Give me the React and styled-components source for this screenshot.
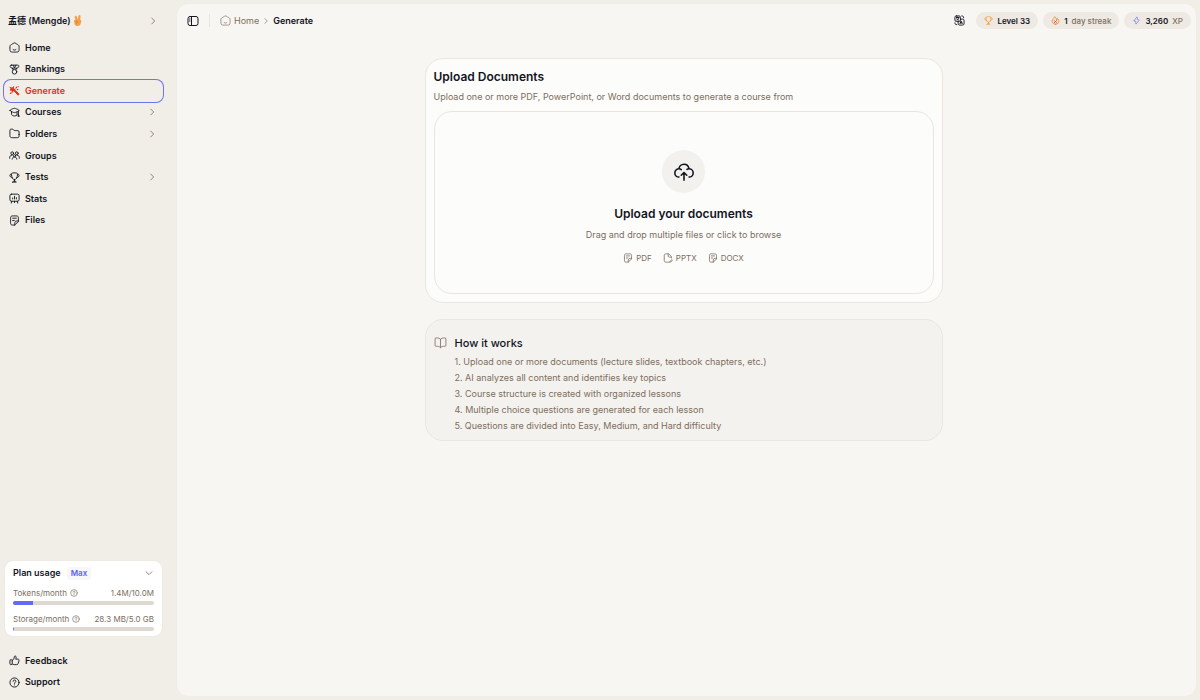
import React from 'react';
import styled, { createGlobalStyle } from 'styled-components';

const GlobalStyle = createGlobalStyle`
    *, *::before, *::after {
        box-sizing: border-box;
    }

    body {
        margin: 0;
        background-color: #F1EEE7;
        color: #12151F;
        font-family: Inter, "Noto Sans CJK SC", sans-serif;
        font-size: 9px;
        line-height: 16px;
    }

    button {
        padding: 0;
        border: 0;
        background: none;
        color: inherit;
        font: inherit;
        cursor: pointer;
    }

    a {
        color: inherit;
        text-decoration: none;
    }

    h1, h2, p, ul, ol {
        margin: 0;
        padding: 0;
        list-style: none;
    }
`;

const Layout = styled.div`
    display: grid;
    grid-template-columns: 168px minmax(0, 1fr);
    column-gap: 9px;
    min-height: 100vh;
    padding-right: 4px;
`;

const Sidebar = styled.aside`
    display: flex;
    flex-direction: column;
    padding: 10px 5px 7px 4px;
`;

const SidebarSpacer = styled.div`
    flex: 1;
`;

const Profile = styled.button`
    display: flex;
    justify-content: space-between;
    align-items: center;
    height: 21px;
    margin-bottom: 6px;
    padding: 0 5px 0 4px;
    font-weight: 600;
`;

const ProfileName = styled.span`
    display: flex;
    align-items: center;
    gap: 2px;
`;

const NavList = styled.ul`
    display: grid;
    grid-auto-rows: 1fr;
    min-height: ${(props) => props.$height}px;
`;

const NavItem = styled.li`
    display: flex;
`;

const NavLink = styled.a`
    display: flex;
    align-items: center;
    gap: 5px;
    flex: 1;
    padding: 0 6px 0 5px;
    border-radius: 7px;
    font-weight: 600;
    color: ${(props) => (props.$active ? '#E5301F' : 'inherit')};
    box-shadow: ${(props) => (props.$active ? '0 0 0 1px #6C75EE' : 'none')};
`;

const NavLabel = styled.span`
    flex: 1;
`;

const Icon = styled.svg`
    flex: none;
    width: ${(props) => props.$size || 11}px;
    height: ${(props) => props.$size || 11}px;
    fill: none;
    stroke: ${(props) => props.$color || 'currentColor'};
    stroke-width: ${(props) => props.$weight || 2};
    stroke-linecap: round;
    stroke-linejoin: round;
`;

const PlanCard = styled.section`
    display: flex;
    flex-direction: column;
    margin: 0 1px 14px 1px;
    padding: 3px 8px 5px;
    border-radius: 8px;
    background-color: #FFFFFF;
    box-shadow: 0 0 1px #D5D0C5;
`;

const PlanHeader = styled.button`
    display: flex;
    align-items: center;
    gap: 6px;
    height: 18px;
    margin-bottom: 3px;
    font-weight: 600;
`;

const PlanBadge = styled.span`
    padding: 0 4px;
    border-radius: 3px;
    background-color: #F7F7FA;
    color: #5B62F0;
    font-size: 8px;
    line-height: 13px;
`;

const PlanChevron = styled.span`
    display: flex;
    margin-left: auto;
`;

const Usage = styled.div`
    display: flex;
    flex-direction: column;
    padding-bottom: 6px;

    & + & {
        padding-bottom: 0;
    }
`;

const UsageRow = styled.div`
    display: flex;
    justify-content: space-between;
    align-items: center;
    color: #7D6E60;
    font-size: 8px;
`;

const UsageLabel = styled.span`
    display: flex;
    align-items: center;
    gap: 3px;
`;

const UsageTrack = styled.div`
    height: 4px;
    border-radius: 2px;
    background-color: #DDD9D1;
    overflow: hidden;
`;

const UsageFill = styled.div`
    height: 100%;
    background-color: #636BF5;
`;

const Main = styled.main`
    display: flex;
    flex-direction: column;
    margin: 4px 0;
    border-radius: 11px;
    background-color: #F7F6F2;
    box-shadow: 0 0 1px #E6E2D9;
`;

const TopBar = styled.header`
    display: flex;
    align-items: center;
    height: 33px;
    padding: 0 5px 0 10px;
`;

const IconButton = styled.button`
    display: flex;
`;

const Separator = styled.div`
    width: 1px;
    height: 13px;
    margin: 0 10px;
    background-color: #E8E5DE;
`;

const Breadcrumb = styled.nav`
    display: flex;
    align-items: center;
    gap: 3px;
    flex: 1;
    color: #7D6E60;
`;

const HomeCrumb = styled.a`
    display: flex;
    align-items: center;
    gap: 3px;
`;

const CurrentCrumb = styled.span`
    color: #12151F;
    font-weight: 600;
`;

const TopActions = styled.div`
    display: flex;
    align-items: center;
    gap: 11px;
`;

const Badges = styled.div`
    display: flex;
    align-items: center;
    gap: 5px;
`;

const Badge = styled.div`
    display: flex;
    align-items: center;
    gap: 4px;
    height: 17px;
    padding: 0 8px;
    border-radius: 9px;
    background-color: #EEEAE3;
    color: #7D6E60;
    font-size: 8px;
    font-weight: 500;
`;

const BadgeValue = styled.strong`
    color: #12151F;
    font-weight: 600;
`;

const Content = styled.div`
    display: flex;
    flex-direction: column;
    align-items: center;
    gap: 16px;
    padding: 21px 6px 21px 0;
`;

const Card = styled.section`
    width: 100%;
    max-width: 518px;
    border: 1px solid #EAE7DF;
    border-radius: 18px;
    background-color: ${(props) => (props.$muted ? '#F4F2EE' : '#FCFCFA')};
`;

const UploadCard = styled(Card)`
    padding: 8px;
`;

const CardTitle = styled.h1`
    font-size: 12px;
    font-weight: 600;
    line-height: 19px;
`;

const CardText = styled.p`
    color: #7D6E60;
`;

const CardHeader = styled.div`
    display: flex;
    flex-direction: column;
    gap: 3px;
    margin-bottom: 6px;
`;

const DropZone = styled.button`
    display: flex;
    flex-direction: column;
    align-items: center;
    width: 100%;
    padding: 38px 16px 27px;
    border: 1px solid #E9E6DF;
    border-radius: 18px;
`;

const UploadCircle = styled.span`
    display: flex;
    justify-content: center;
    align-items: center;
    width: 43px;
    height: 43px;
    margin-bottom: 11px;
    border-radius: 50%;
    background-color: #F3F1ED;
`;

const DropTitle = styled.span`
    margin-bottom: 4px;
    font-size: 12px;
    font-weight: 600;
    line-height: 19px;
`;

const DropText = styled.span`
    margin-bottom: 7px;
    color: #7D6E60;
`;

const FileTypes = styled.span`
    display: flex;
    gap: 11px;
    color: #7D6E60;
    font-size: 8px;
`;

const FileType = styled.span`
    display: flex;
    align-items: center;
    gap: 3px;
`;

const StepsCard = styled(Card)`
    display: flex;
    gap: 8px;
    padding: 15px 8px 6px;
    color: #7D6E60;
`;

const StepsIcon = styled.div`
    display: flex;
    padding-top: 1px;
`;

const StepsTitle = styled.h2`
    margin-bottom: 2px;
    color: #12151F;
    font-size: 11px;
    font-weight: 500;
    line-height: 17px;
`;

const icons = {
    home: (
        <>
            <path d="M2 12.200c0-2.300 0-3.400.5-4.400.5-.9 1.500-1.500 3.400-2.700l2-1.200C9.900 2.600 10.900 2 12 2s2.100.6 4.100 1.900l2 1.200c1.900 1.200 2.900 1.800 3.400 2.700.5 1 .5 2.100.5 4.400v1.500c0 3.900 0 5.900-1.200 7.100S17.800 22 14 22h-4c-3.800 0-5.700 0-6.800-1.200S2 17.600 2 13.700z" />
            <path d="M9 16.500c.9.600 1.900 1 3 1s2.100-.4 3-1" />
        </>
    ),
    rankings: (
        <>
            <circle cx="12" cy="17" r="5" />
            <path d="M9 12.500 7.500 9.500M15 12.500l1.500-3M5 2.500h14c2.500 0 3 2 2 4-.7 1.500-2 2.500-4 2.500H7C5 9 3.700 8 3 6.500c-1-2-.5-4 2-4zM9 2.500l3 6 3-6" />
        </>
    ),
    generate: (
        <>
            <path d="M9.500 11 19 21.500c2 1 3.500-1 2.500-2.500L11 9.500z" fill="currentColor" />
            <path d="M2.500 5.500 7 7l3-3.500-.5 5 4 1.500-4.500 1.500L8 16l-2.500-4.500L2 11l3-2z" fill="currentColor" />
            <path d="M15 7l2-2.500M20 3.500h.1M18 10h1.500M3 18.500l2-1.500" strokeWidth="2.500" />
        </>
    ),
    courses: (
        <>
            <path d="M2 7.500C2 6 8 4 10 3.200c1.800-.6 2.200-.6 4 0C16 4 22 6 22 7.500S16 11 14 11.800c-1.800.6-2.200.6-4 0C8 11 2 9 2 7.500zM20.500 9v8.500M20.500 17.500l-1 3h2zM5.500 10v6.500c2 2.500 4 3 6.500 3s4-.5 5.500-2V11" />
        </>
    ),
    folders: (
        <path d="M22 14v-3c0-2.500 0-3.700-.8-4.500S19.200 5.700 17 5.700h-3.500c-1 0-1.500 0-2.200-.4-.6-.3-.9-.8-1.600-1.500C8.800 2.700 8.300 2.500 7 2.500H6c-2 0-3 0-3.500.9C2 4 2 5 2 7v7c0 3.300 0 5 1 6s2.700 1.200 6 1.200h6c3.300 0 5 0 6-1s1-2.900 1-6.200z" />
    ),
    groups: (
        <>
            <circle cx="7" cy="7" r="3" />
            <circle cx="17" cy="7" r="3" />
            <circle cx="12" cy="12.500" r="2.500" />
            <path d="M1.500 18v-2c0-2.500 1.500-4.500 5-4.500M22.500 18v-2c0-2.500-1.500-4.500-5-4.500M7 20c0-3 2-4.500 5-4.500s5 1.500 5 4.500" />
        </>
    ),
    trophy: (
        <>
            <path d="M12 17c-3.500 0-6.500-5.500-6.500-11.500C5.500 3 6 2.500 8.500 2h7c2.500.5 3 1 3 3.500C18.500 11.500 15.500 17 12 17zM5.500 5C3 5 2 5 2 7c0 3 2.500 5.200 5 5.700M18.500 5C21 5 22 5 22 7c0 3-2.500 5.200-5 5.700M12 17v3M8 22h8c-.5-1.500-2-2-4-2s-3.500.5-4 2z" />
        </>
    ),
    stats: (
        <>
            <rect x="2" y="2.500" width="20" height="15.500" rx="3.500" />
            <path d="M8 13v-2M12 13V7M16 13v-3M6 18l-1 4M18 18l1 4M12 18v3" />
        </>
    ),
    note: (
        <>
            <path d="M20.500 12V9c0-3.300 0-5-1-6s-2.700-1-6-1h-3c-3.300 0-5 0-6 1s-1 2.700-1 6v6c0 3.300 0 5 1 6s2.700 1 6 1h1.500l8.500-7.500zM12.500 22c0-5 0-7.500 2-8.500 1.500-.8 4-.5 6-.5M8 7h8M8 12h3.500" />
        </>
    ),
    file: (
        <>
            <path d="M13 22H10c-3.300 0-5 0-6-1s-1-2.700-1-6V9c0-3.300 0-5 1-6s2.700-1 6-1h2.500c1 0 1.500.2 2.200.9l4.800 5c.8.8 1 1.200 1 2.300V12M12.500 2.500V5c0 2.500 0 4 1 4.500s2 .5 6.500.5M16 21.500l5-5.500 1.500 1.500L18 22h-2z" />
        </>
    ),
    like: (
        <>
            <path d="M2 12c0-1 .8-2 2-2s3 .8 3 2v7c0 1.500-1.500 2-3 2s-2-.8-2-2zM7 12c3.500-2 4-4.500 4.500-7.500.3-2 1-2.500 2-2.500 1.500 0 2 1.500 2 3s-.5 3-1 4h5c2 0 2.800 1.500 2.300 3.500l-1.800 6c-.5 1.800-1.500 2.500-3.500 2.500H12c-2 0-3.500-.5-5-1.500" />
        </>
    ),
    help: (
        <>
            <circle cx="12" cy="12" r="10" />
            <path d="M9 9.500C9 7.500 10.300 6.500 12 6.500s3 1 3 2.800c0 2.200-3 2.200-3 4.700M12 17.200v.1" />
        </>
    ),
    right: <path d="m9 5 7 7-7 7" />,
    down: <path d="m5 9 7 7 7-7" />,
    panel: (
        <>
            <rect x="2" y="3" width="20" height="18" rx="4" />
            <path d="M9 3v18M5 8h1M5 12h1" />
        </>
    ),
    translate: (
        <>
            <rect x="2" y="2" width="12" height="12" rx="3" />
            <path d="M5 5.500h6M8 4v1.500M6 11c3-1 4-3 4.500-5.500M6 8c1 1.500 2 2.500 4 3M14 9h4c3 0 4 1 4 4v5c0 3-1 4-4 4h-5c-3 0-4-1-4-4v-4M13 19l2.500-6 2.500 6M14 17h3M17 2c3 0 4 1 4 4M2 17c0 3 1 4 4 4" />
        </>
    ),
    flame: (
        <>
            <path d="M12 22c5 0 9-3 9-8 0-4-2-6-4-7-1 2-1 3-2 3.500C14.500 6 12.500 3 9.500 2 10 6.500 3 8 3 14c0 5 4 8 9 8z" />
            <path d="m9 17.500 6-5M9 13v.1M15 18v.1" stroke="#E5402E" />
        </>
    ),
    bolt: <path d="M5.500 12.500 12.500 3c.8-1 1.500-.7 1.500.5V9c0 .7.3 1 1 1h3c1.200 0 1.500.7.8 1.600L11.500 21c-.8 1-1.500.7-1.500-.5V15c0-.7-.3-1-1-1H6.300c-1.100 0-1.500-.7-.8-1.500z" />,
    upload: (
        <>
            <path d="M17.500 17.500C20 17.500 22 15.500 22 13s-2-4.500-4.500-4.500C17 5.500 15 3.500 12 3.500S6.700 5.700 6.500 8.500C4 8.500 2 10.500 2 13s2 4.500 4.500 4.500M17.500 8.500c-1 0-1.700.2-2.300.6M6.500 8.500c1 0 1.800.3 2.500.9" />
            <path d="M12 21v-8M9 15.500l3-3 3 3" />
        </>
    ),
    book: (
        <path d="M12 6c-1.500-2-4-2.500-8-2.500-1.500 0-2 .5-2 2V17c0 1.500.5 2 2 2 4 0 6.500.5 8 2.500 1.500-2 4-2.500 8-2.500 1.500 0 2-.5 2-2V5.500c0-1.500-.5-2-2-2-4 0-6.500.5-8 2.500zM12 6v15.500" />
    ),
};

const navItems = [
    { label: 'Home', icon: 'home' },
    { label: 'Rankings', icon: 'rankings' },
    { label: 'Generate', icon: 'generate', active: true },
    { label: 'Courses', icon: 'courses', nested: true },
    { label: 'Folders', icon: 'folders', nested: true },
    { label: 'Groups', icon: 'groups' },
    { label: 'Tests', icon: 'trophy', nested: true },
    { label: 'Stats', icon: 'stats' },
    { label: 'Files', icon: 'note' },
];

const footerItems = [
    { label: 'Feedback', icon: 'like' },
    { label: 'Support', icon: 'help' },
];

const usage = [
    { label: 'Tokens/month', value: '1.4M/10.0M', percent: 14 },
    { label: 'Storage/month', value: '28.3 MB/5.0 GB', percent: 1 },
];

const steps = [
    'Upload one or more documents (lecture slides, textbook chapters, etc.)',
    'AI analyzes all content and identifies key topics',
    'Course structure is created with organized lessons',
    'Multiple choice questions are generated for each lesson',
    'Questions are divided into Easy, Medium, and Hard difficulty',
];

function Glyph({ name, size, color, weight }) {
    return (
        <Icon viewBox="0 0 24 24" $size={size} $color={color} $weight={weight} aria-hidden="true">
            {icons[name]}
        </Icon>
    );
}

function VictoryHand() {
    return (
        <svg width="9" height="11" viewBox="0 0 18 22" aria-hidden="true">
            <path d="M5.500 4 8 12M13 2.500 11.500 12" stroke="#F3A04B" strokeWidth="4.500" strokeLinecap="round" />
            <path d="M2 12c0-2.500 2-3.500 5-3h6c3 0 4 2 3.500 4.500L15 18c-.5 2.500-2.500 4-5.500 4s-5.500-1-6.500-4z" fill="#F3A04B" />
            <path d="M5 13c2-1 5 0 4 2s-3 1-3 1" stroke="#D9691E" strokeWidth="1.500" fill="none" />
        </svg>
    );
}

function Navigation({ items, height }) {
    return (
        <NavList $height={height}>
            {items.map((item) => (
                <NavItem key={item.label}>
                    <NavLink href="#" $active={item.active}>
                        <Glyph name={item.icon} />
                        <NavLabel>{item.label}</NavLabel>
                        {item.nested && <Glyph name="right" size={10} color="#7D6E60" />}
                    </NavLink>
                </NavItem>
            ))}
        </NavList>
    );
}

function PlanUsage() {
    return (
        <PlanCard>
            <PlanHeader>
                <span>Plan usage</span>
                <PlanBadge>Max</PlanBadge>
                <PlanChevron>
                    <Glyph name="down" size={10} color="#7D6E60" />
                </PlanChevron>
            </PlanHeader>
            {usage.map((item) => (
                <Usage key={item.label}>
                    <UsageRow>
                        <UsageLabel>
                            {item.label}
                            <Glyph name="help" size={8} />
                        </UsageLabel>
                        <span>{item.value}</span>
                    </UsageRow>
                    <UsageTrack>
                        <UsageFill style={{ width: `${item.percent}%` }} />
                    </UsageTrack>
                </Usage>
            ))}
        </PlanCard>
    );
}

function App() {
    return (
        <>
            <GlobalStyle />
            <Layout>
                <Sidebar>
                    <Profile>
                        <ProfileName>
                            孟德 (Mengde)
                            <VictoryHand />
                        </ProfileName>
                        <Glyph name="right" size={10} color="#7D6E60" />
                    </Profile>
                    <Navigation items={navItems} height={194} />
                    <SidebarSpacer />
                    <PlanUsage />
                    <Navigation items={footerItems} height={43} />
                </Sidebar>
                <Main>
                    <TopBar>
                        <IconButton aria-label="Toggle sidebar">
                            <Glyph name="panel" size={12} />
                        </IconButton>
                        <Separator />
                        <Breadcrumb>
                            <HomeCrumb href="#">
                                <Glyph name="home" weight={1.5} />
                                Home
                            </HomeCrumb>
                            <Glyph name="right" size={8} />
                            <CurrentCrumb>Generate</CurrentCrumb>
                        </Breadcrumb>
                        <TopActions>
                            <IconButton aria-label="Change language">
                                <Glyph name="translate" />
                            </IconButton>
                            <Badges>
                                <Badge>
                                    <Glyph name="trophy" size={9} color="#F59A3C" />
                                    <BadgeValue>Level 33</BadgeValue>
                                </Badge>
                                <Badge>
                                    <Glyph name="flame" size={9} color="#F28A3C" weight={2.5} />
                                    <BadgeValue>1</BadgeValue>
                                    <span>day streak</span>
                                </Badge>
                                <Badge>
                                    <Glyph name="bolt" size={9} color="#777DF2" />
                                    <BadgeValue>3,260</BadgeValue>
                                    <span>XP</span>
                                </Badge>
                            </Badges>
                        </TopActions>
                    </TopBar>
                    <Content>
                        <UploadCard>
                            <CardHeader>
                                <CardTitle>Upload Documents</CardTitle>
                                <CardText>
                                    Upload one or more PDF, PowerPoint, or Word documents to generate a course from
                                </CardText>
                            </CardHeader>
                            <DropZone>
                                <UploadCircle>
                                    <Glyph name="upload" size={22} weight={1.7} />
                                </UploadCircle>
                                <DropTitle>Upload your documents</DropTitle>
                                <DropText>Drag and drop multiple files or click to browse</DropText>
                                <FileTypes>
                                    <FileType>
                                        <Glyph name="note" size={10} />
                                        PDF
                                    </FileType>
                                    <FileType>
                                        <Glyph name="file" size={10} />
                                        PPTX
                                    </FileType>
                                    <FileType>
                                        <Glyph name="note" size={10} />
                                        DOCX
                                    </FileType>
                                </FileTypes>
                            </DropZone>
                        </UploadCard>
                        <StepsCard $muted>
                            <StepsIcon>
                                <Glyph name="book" size={13} weight={1.5} />
                            </StepsIcon>
                            <div>
                                <StepsTitle>How it works</StepsTitle>
                                <ol>
                                    {steps.map((step, index) => (
                                        <li key={step}>{`${index + 1}. ${step}`}</li>
                                    ))}
                                </ol>
                            </div>
                        </StepsCard>
                    </Content>
                </Main>
            </Layout>
        </>
    );
}

export default App;
